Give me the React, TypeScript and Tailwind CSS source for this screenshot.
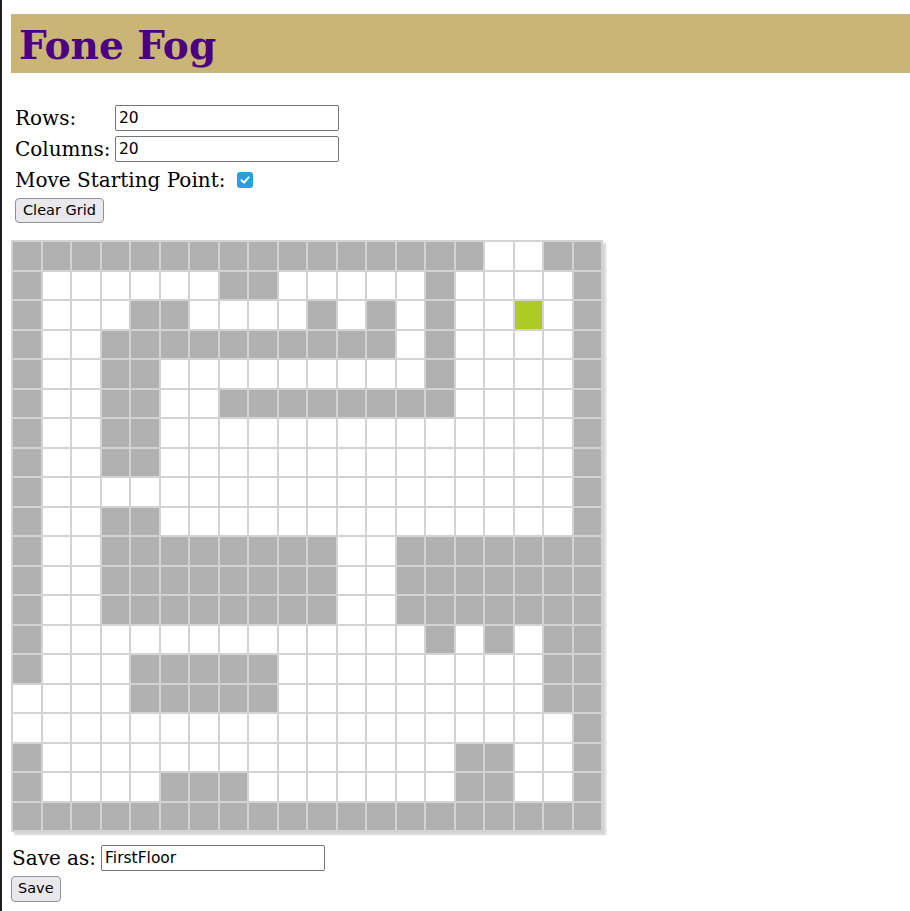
import React, { useState } from "react";

// 1 = wall, 0 = open, 2 = starting point
const initialGrid = [
  "11111111111111110011",
  "10000001100000100001",
  "10001100001010100201",
  "10011111111110100001",
  "10011000000000100001",
  "10011001111111100001",
  "10011000000000000001",
  "10011000000000000001",
  "10000000000000000001",
  "10011000000000000001",
  "10011111111001111111",
  "10011111111001111111",
  "10011111111001111111",
  "10000000000000101011",
  "10001111100000000011",
  "00001111100000000011",
  "00000000000000000001",
  "10000000000000011001",
  "10000111000000011001",
  "11111111111111111111",
].map((row) => row.split("").map((c) => Number(c)));

export default function App() {
  const [rows, setRows] = useState("20");
  const [cols, setCols] = useState("20");
  const [moveStart, setMoveStart] = useState(true);
  const [name, setName] = useState("FirstFloor");
  const [grid, setGrid] = useState(initialGrid);

  const toggle = (r: number, c: number) => {
    setGrid((g) =>
      g.map((row, ri) =>
        row.map((v, ci) => {
          if (moveStart) {
            if (ri === r && ci === c) return 2;
            return v === 2 ? 0 : v;
          }
          if (ri === r && ci === c) return v === 1 ? 0 : v === 0 ? 1 : v;
          return v;
        })
      )
    );
  };

  return (
    <div className="min-h-screen bg-white border-l-2 border-[#1e1e1e] pl-[9px] pt-[14px] font-['DejaVu_Serif',serif] text-[20px] text-black">
      {/* === HEADER === */}
      <header className="h-[59px] bg-[#c9b576] flex items-center pl-2">
        <h1 className="text-[39px] font-bold text-[#4b0082] leading-none pt-[4px]">
          Fone Fog
        </h1>
      </header>

      {/* === FORM === */}
      <div className="mt-[32px] pl-1">
        <div className="flex items-center h-[26px]">
          <label className="w-[100px]">Rows:</label>
          <input
            value={rows}
            onChange={(e) => setRows(e.target.value)}
            className="w-[224px] h-[26px] border border-[#767676] rounded-[2px] px-[3px] font-['DejaVu_Sans',sans-serif] text-[15.5px]"
          />
        </div>
        <div className="flex items-center h-[26px] mt-[5px]">
          <label className="w-[100px]">Columns:</label>
          <input
            value={cols}
            onChange={(e) => setCols(e.target.value)}
            className="w-[224px] h-[26px] border border-[#767676] rounded-[2px] px-[3px] font-['DejaVu_Sans',sans-serif] text-[15.5px]"
          />
        </div>
        <div className="flex items-center h-[24px] mt-[6px] gap-[12px]">
          <span>Move Starting Point:</span>
          <button
            onClick={() => setMoveStart(!moveStart)}
            className={
              moveStart
                ? "w-[16px] h-[16px] rounded-[3px] bg-[#2a9fdc] flex items-center justify-center"
                : "w-[16px] h-[16px] rounded-[3px] border border-[#767676] bg-white"
            }
          >
            {moveStart && (
              <svg width="12" height="12" viewBox="0 0 12 12">
                <path d="M2.5 6.2 L5 8.6 L9.6 3.4" stroke="white" strokeWidth="2" fill="none" strokeLinecap="round" strokeLinejoin="round" />
              </svg>
            )}
          </button>
        </div>
        <button
          onClick={() => setGrid(initialGrid.map((r) => r.map(() => 0)))}
          className="mt-[6px] h-[25px] px-[7px] bg-[#e9e9ed] border border-[#8f8f9d] rounded-[4px] font-['DejaVu_Sans',sans-serif] text-[14.5px]"
        >
          Clear Grid
        </button>
      </div>

      {/* === GRID === */}
      <div className="mt-[17px] w-[592px] grid grid-cols-20 gap-[2px] p-[2px] bg-[#d3d3d3] shadow-[3px_3px_2px_#d6d6d6]">
        {grid.map((row, r) =>
          row.map((v, c) => (
            <div
              key={r + "-" + c}
              onClick={() => toggle(r, c)}
              className={
                v === 1
                  ? "aspect-square bg-[#b1b1b1]"
                  : v === 2
                  ? "aspect-square bg-[#adcb22]"
                  : "aspect-square bg-white"
              }
            />
          ))
        )}
      </div>

      {/* === SAVE === */}
      <div className="mt-[13px] flex items-center h-[26px] gap-[5px] pl-[1px]">
        <label>Save as:</label>
        <input
          value={name}
          onChange={(e) => setName(e.target.value)}
          className="w-[224px] h-[26px] border border-[#767676] rounded-[2px] px-[3px] font-['DejaVu_Sans',sans-serif] text-[15.5px]"
        />
      </div>
      <button className="h-[26px] px-[6px] bg-[#e9e9ed] border border-[#8f8f9d] rounded-[4px] font-['DejaVu_Sans',sans-serif] text-[14.5px]">
        Save
      </button>
    </div>
  );
}
